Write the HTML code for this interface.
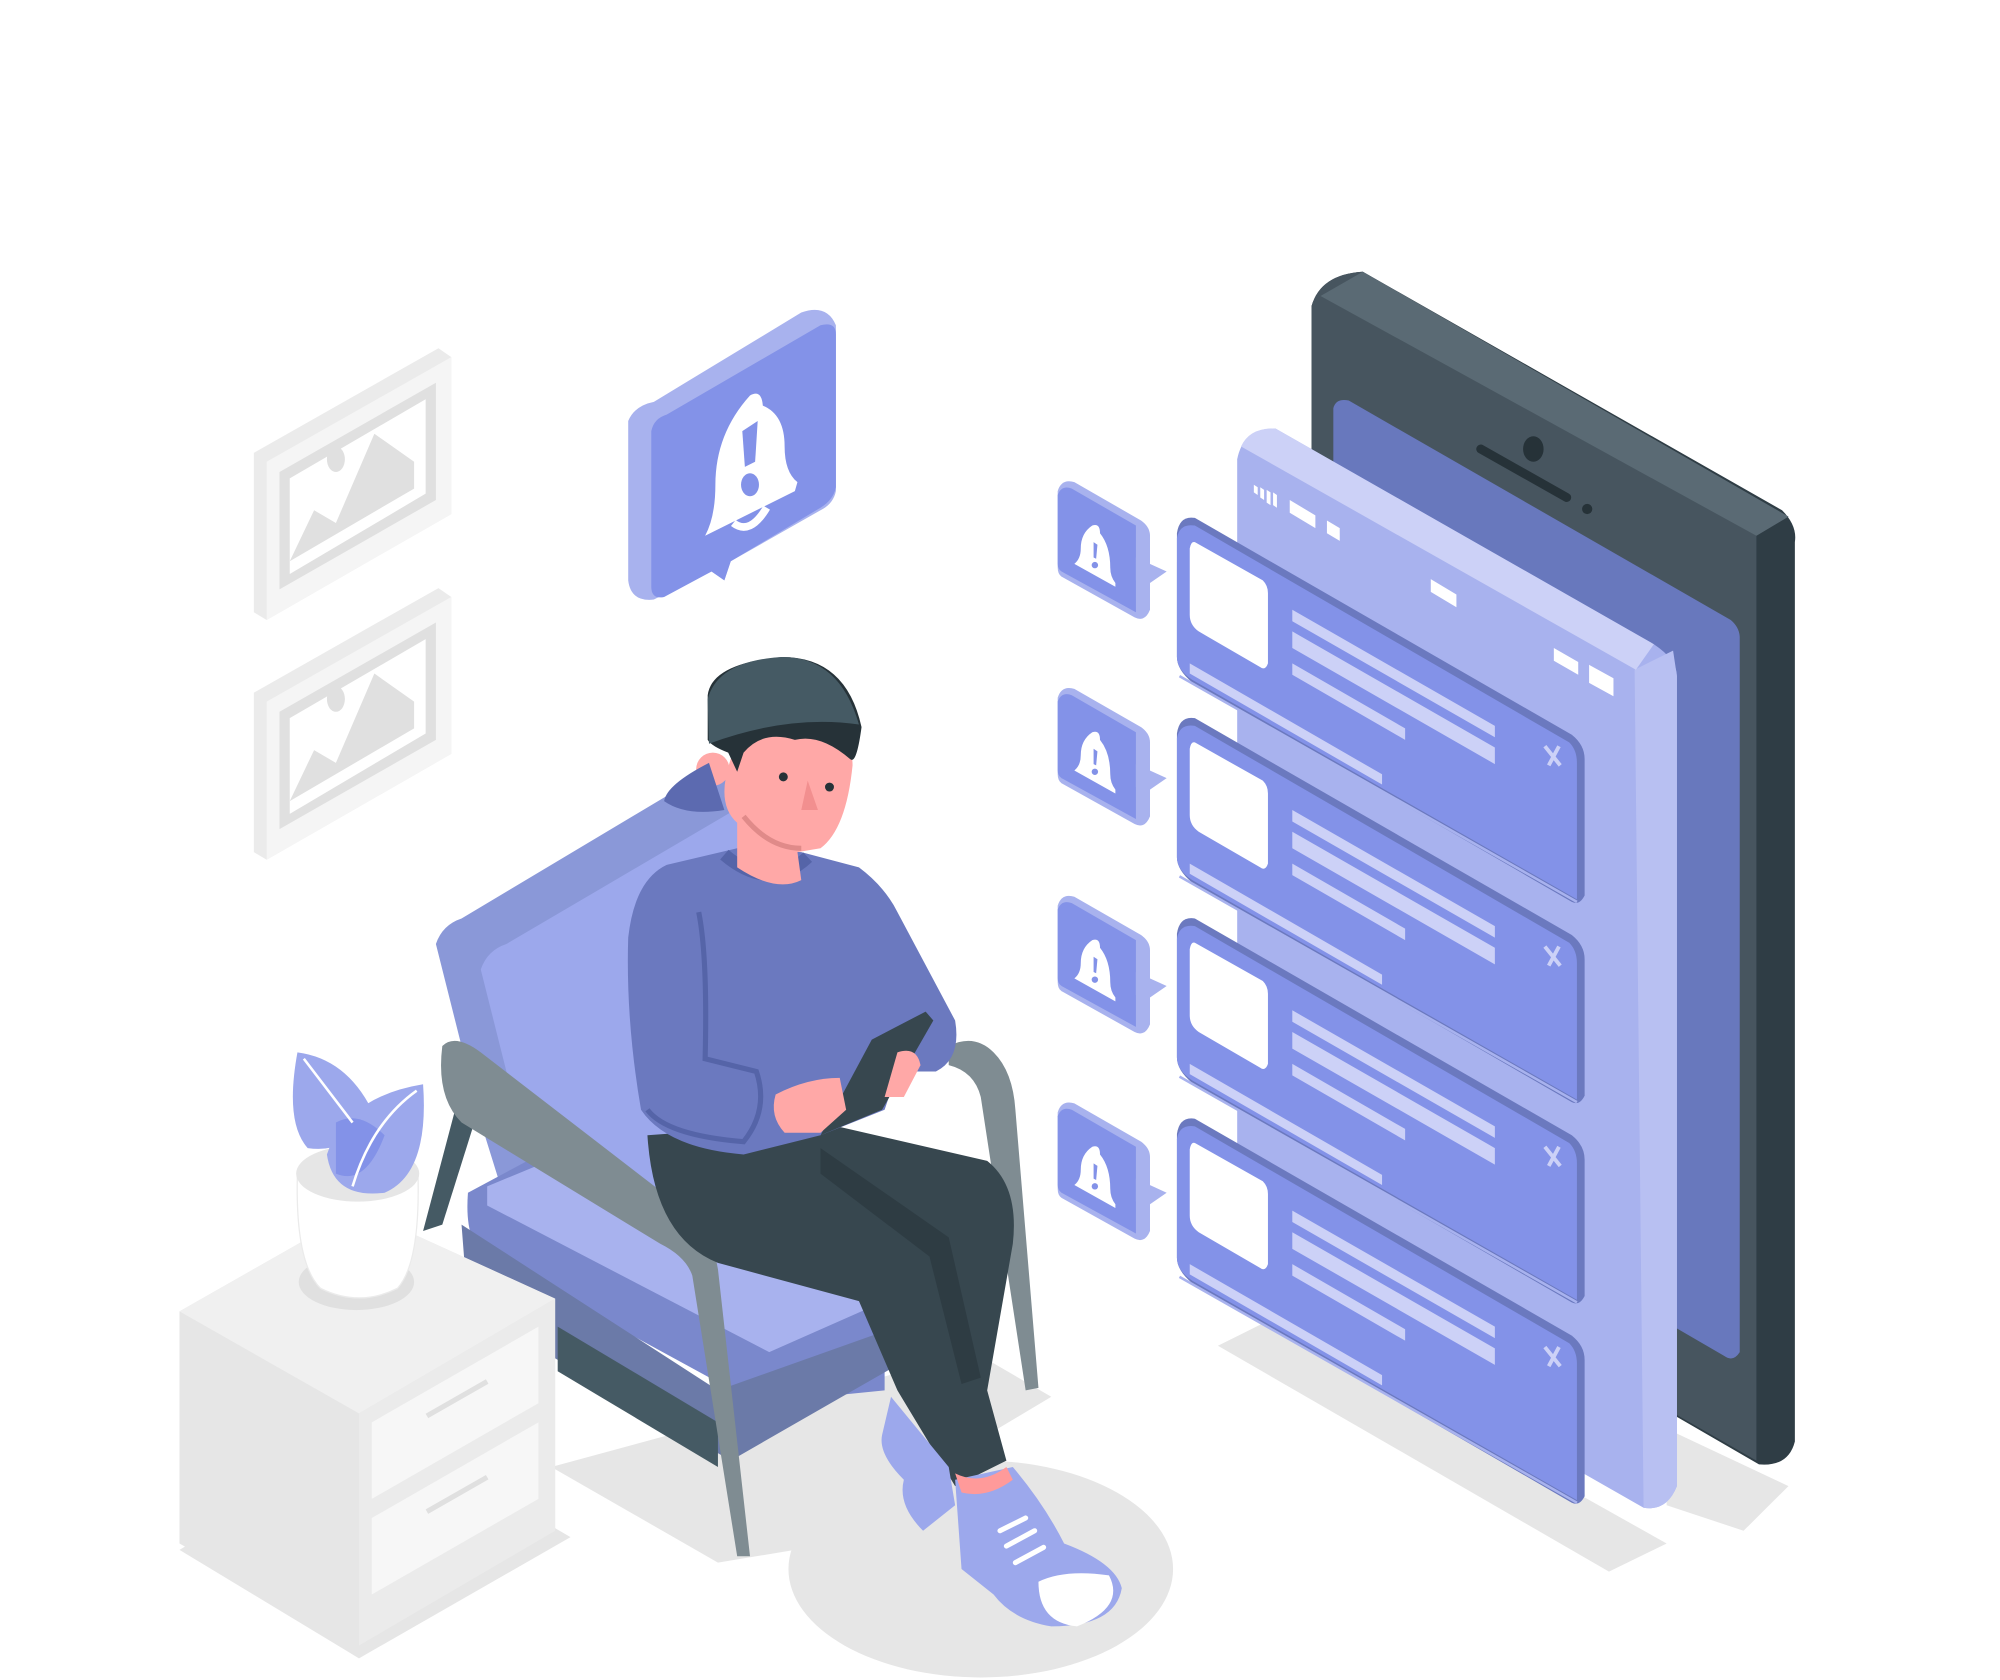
<!DOCTYPE html>
<html><head><style>html,body{margin:0;padding:0;background:#fff}svg{display:block}</style></head>
<body>
<svg width="2000" height="1680" viewBox="0 0 1560 1317" preserveAspectRatio="none" xmlns="http://www.w3.org/2000/svg">
<rect width="1560" height="1317" fill="#fff"/>
<!-- floor shadows -->
<path d="M950 1055 L990 1035 L1300 1210 L1255 1232 Z" fill="#e6e6e6"/>
<path d="M1300 1120 L1395 1165 L1360 1200 L1300 1180 Z" fill="#e6e6e6"/>
<ellipse cx="765" cy="1230" rx="150" ry="85" fill="#e6e6e6"/>
<path d="M430 1150 L560 1225 L620 1215 L820 1095 L760 1060 Z" fill="#e6e6e6"/>
<path d="M140 1215 L280 1300 L445 1205 L300 1120 Z" fill="#e6e6e6"/>
<!-- phone -->
<path d="M1023 240 Q1030 215 1063 213 L1390 400 Q1402 412 1400 425 L1400 1130 Q1395 1150 1372 1148 L1023 945 Z" fill="#2f3d45"/>
<path d="M1023 240 Q1030 215 1063 213 L1395 405 L1370 420 L1370 1145 L1023 945 Z" fill="#47555f"/>
<path d="M1030 232 L1063 213 L1395 405 L1370 420 Z" fill="#5a6a74"/>
<path d="M1040 320 Q1042 312 1052 314 L1350 486 Q1357 492 1357 500 L1357 1060 Q1352 1068 1345 1063 L1040 885 Z" fill="#6878bd"/>
<path d="M1155 352 L1222 390" stroke="#263238" stroke-width="7" stroke-linecap="round"/>
<ellipse cx="1196" cy="352" rx="8" ry="10" fill="#263238"/>
<circle cx="1238" cy="399" r="4" fill="#263238"/>
<!-- panel -->
<path d="M965 360 Q970 335 995 336 L1290 505 Q1308 517 1308 530 L1308 1165 Q1300 1185 1282 1182 L965 1000 Z" fill="#a8b2ee"/>
<path d="M1275 525 L1305 510 L1308 530 L1308 1165 Q1300 1185 1282 1182 Z" fill="#b8c0f2"/>
<path d="M968 350 Q975 335 995 336 L1290 505 L1276 525 Z" fill="#ccd1f7"/>
<g fill="#fff"><path d="M978 380 l3 2v6l-3-2z M983 382 l3 2v8l-3-2z M988 384 l3 2v10l-3-2z M993 386 l3 2v10l-3-2z"/>
<path d="M1006 392 l20 12v10l-20-12z"/><path d="M1035 408 l10 6v10l-10-6z"/><path d="M1116 454 l20 12v10l-20-12z"/><path d="M1212 508 l19 11v10l-19-11z"/>
<path d="M1240 522 l18 10v13l-18-10z" stroke="#fff"/></g>
<!-- cards -->
<g id="card">
<path d="M918 418 Q920 404 932 406 L1226 576 Q1236 584 1236 595 L1236 702 Q1232 710 1226 707 L930 535 Q918 525 918 515 Z" fill="#6b79bf"/>
<path d="M918 422 Q920 410 932 412 L1224 582 Q1230 588 1230 598 L1230 705 L930 533 Q918 525 918 515 Z" fill="#8392e8"/>
<path d="M932 425 L985 455 Q989 459 989 465 L989 520 Q987 526 983 523 L935 495 Q928 490 928 482 L928 430 Q929 424 932 425 Z" fill="#fff"/>
<path d="M1008 478 l158 91v9l-158-91z M1008 495 l158 91v13l-158-91z M1008 520 l88 51v9l-88-51z M928 520 l150 87v8l-150-87z" fill="#ccd1f7"/>
<path d="M920 530 L1230 707" stroke="#a8b2ee" stroke-width="2"/>
<path d="M1205 585 l12 15 M1216 585 l-8 15" stroke="#ccd1f7" stroke-width="3"/>
</g>
<use href="#card" y="157"/><use href="#card" y="314"/><use href="#card" y="471"/>
<!-- small bells -->
<g id="bell">
<path d="M825 385 Q828 375 838 378 L890 408 Q897 413 897 420 L897 478 Q893 488 885 484 L828 452 Q825 450 825 445 Z" fill="#a8b2ee"/>
<path d="M825 388 Q828 380 836 383 L886 412 L886 480 L828 448 Q825 446 825 442 Z" fill="#8392e8"/>
<path d="M886 437 L910 448 L897 457 L886 455 Z" fill="#a8b2ee"/>
<path d="M852 412 Q858 410 858 418 Q866 428 866 445 Q866 452 870 457 L870 460 L838 442 Q843 438 843 430 Q843 418 852 412 Z" fill="#fff"/>
<path d="M853 425 l3 2 -1 11 -2 -1z" fill="#8392e8"/><circle cx="854" cy="443" r="2.5" fill="#8392e8"/>
</g>
<use href="#bell" y="162"/><use href="#bell" y="325"/><use href="#bell" y="487"/>
<!-- big bell box -->
<path d="M490 330 Q495 318 510 315 L625 245 Q645 238 652 255 L652 385 Q650 395 640 400 L570 440 L565 455 L555 448 L510 470 Q492 472 490 455 Z" fill="#a8b2ee"/>
<path d="M508 338 Q510 328 520 325 L640 255 Q652 252 652 262 L652 382 Q650 392 640 398 L570 440 L565 455 L555 448 L518 468 Q508 470 508 460 Z" fill="#8392e8"/>
<path d="M585 310 Q594 305 595 318 Q612 325 612 350 Q612 370 622 378 L620 385 L550 420 Q558 405 558 380 Q558 340 585 310 Z" fill="#fff"/>
<path d="M579 338 l12-8 -2 32 -8 4z" fill="#8392e8"/><ellipse cx="585" cy="380" rx="7" ry="9" fill="#8392e8"/>
<path d="M572 410 Q585 420 598 398" stroke="#fff" stroke-width="6" fill="none"/>
<!-- frames -->
<g id="frame">
<path d="M198 355 L342 273 L352 280 L352 403 L208 486 L198 480 Z" fill="#ebebeb"/>
<path d="M208 362 L352 280 L352 403 L208 486 Z" fill="#f5f5f5"/>
<path d="M218 370 L340 300 L340 392 L218 462 Z" fill="#e0e0e0"/>
<path d="M226 375 L332 313 L332 387 L226 450 Z" fill="#fff"/>
<path d="M226 440 L245 400 L262 410 L292 340 L323 362 L323 383 L226 440 Z" fill="#e0e0e0"/>
<ellipse cx="262" cy="360" rx="7" ry="10" fill="#e0e0e0"/>
</g>
<use href="#frame" y="188"/>
<!-- chair -->
<path d="M340 740 Q345 725 360 720 L560 600 L600 640 L600 1000 L430 1060 Q400 960 375 880 Z" fill="#8a98d8"/>
<path d="M375 760 Q380 745 395 740 L590 625 L610 1000 L430 970 Q410 900 395 840 Z" fill="#9ca8ec"/>
<path d="M365 935 L430 900 L690 1030 L690 1090 L590 1100 L380 985 Q362 975 365 935 Z" fill="#7a88cc"/>
<path d="M380 930 L440 905 L690 1020 L600 1060 L380 945 Z" fill="#a8b2ee"/>
<path d="M360 960 L560 1090 L700 1040 L700 1070 L570 1145 L365 1025 Z" fill="#6b7aa8"/>
<path d="M435 1040 L560 1115 L560 1150 L435 1075 Z" fill="#455a64"/>
<path d="M330 965 L355 870 L370 880 L345 960 Z" fill="#455a64"/>
<path d="M345 820 Q355 810 375 825 L530 945 Q555 965 560 995 L585 1220 L575 1220 L540 1000 Q535 985 515 975 L360 880 Q340 860 345 820 Z" fill="#7f8c92"/>
<path d="M740 820 Q760 810 775 825 Q790 840 792 870 L810 1088 L800 1090 L765 860 Q760 840 740 835 Z" fill="#7f8c92"/>
<path d="M660 740 L680 760 L690 800 L665 800 Z" fill="#7f8c92"/>
<!-- nightstand -->
<path d="M140 1028 L280 948 L433 1018 L433 1200 L280 1290 L140 1210 Z" fill="#e6e6e6"/>
<path d="M140 1028 L280 948 L433 1018 L280 1108 Z" fill="#f0f0f0"/>
<path d="M280 1108 L433 1018 L433 1200 L280 1290 Z" fill="#ebebeb"/>
<path d="M290 1115 L420 1040 L420 1100 L290 1175 Z M290 1190 L420 1115 L420 1175 L290 1250 Z" fill="#f7f7f7"/>
<path d="M333 1110 L380 1083 M333 1185 L380 1158" stroke="#e0e0e0" stroke-width="4"/>
<!-- plant pot -->
<ellipse cx="278" cy="1005" rx="45" ry="22" fill="#e0e0e0"/>
<path d="M232 920 Q230 990 250 1010 Q280 1025 310 1010 Q328 990 326 920 Z" fill="#fff" stroke="#ebebeb"/>
<ellipse cx="279" cy="920" rx="48" ry="22" fill="#e6e6e6"/>
<path d="M232 825 Q270 830 290 870 Q275 905 240 900 Q222 880 232 825 Z" fill="#9ca8ec"/>
<path d="M330 850 Q335 920 300 935 Q260 940 255 905 Q270 860 330 850 Z" fill="#9ca8ec"/>
<path d="M262 880 Q280 870 300 890 Q285 930 262 920 Z" fill="#8392e8"/>
<path d="M237 830 L275 880 M325 855 Q290 880 275 930" stroke="#fff" stroke-width="2" fill="none"/>
<!-- person legs -->
<path d="M505 890 L640 880 L770 910 Q795 930 790 975 L770 1090 L785 1145 L745 1165 L700 1090 L670 1020 L560 990 Q510 970 505 890 Z" fill="#37474f"/>
<path d="M640 900 L740 970 L765 1080 L750 1085 L725 985 L640 920 Z" fill="#263238" opacity=".5"/>
<!-- shoes -->
<path d="M695 1095 L740 1150 L745 1180 L720 1200 Q700 1180 705 1160 Q685 1140 688 1125 Z" fill="#9ca8ec"/>
<path d="M745 1160 L790 1150 Q815 1180 830 1210 Q870 1225 875 1245 Q870 1275 820 1275 Q790 1270 775 1250 L750 1230 Z" fill="#9ca8ec"/>
<path d="M810 1240 Q830 1230 865 1235 Q878 1260 840 1275 Q810 1272 810 1240Z" fill="#fff"/>
<path d="M745 1155 Q765 1165 785 1150 L790 1160 Q770 1175 750 1170 Z" fill="#ff9a9a"/>
<path d="M780 1200 l20-10 M785 1212 l22-12 M792 1225 l22-12" stroke="#fff" stroke-width="4" stroke-linecap="round"/>
<!-- torso -->
<path d="M490 735 Q495 690 520 678 L575 665 L625 668 L670 680 Q690 695 700 715 L745 800 Q750 830 730 840 L700 840 L690 870 L640 890 L580 905 Q520 900 500 870 Q488 800 490 735 Z" fill="#6b79bf"/>
<path d="M545 715 Q552 750 550 830 L590 840 Q600 870 580 895 Q520 890 505 870" fill="none" stroke="#5564a8" stroke-width="4"/>
<path d="M565 670 Q600 700 630 672" stroke="#5564a8" stroke-width="10" fill="none"/>
<!-- tablet & hands -->
<path d="M640 890 L680 815 L722 793 L728 800 L688 870 Z" fill="#37474f"/>
<path d="M605 858 Q630 845 655 845 L660 870 L640 888 L612 888 Q600 875 605 858 Z" fill="#ffa8a7"/>
<path d="M700 825 Q715 820 718 835 L705 860 L690 860 Z" fill="#ffa8a7"/>
<!-- head -->
<path d="M575 585 Q590 565 630 565 Q665 572 665 600 Q660 650 640 665 L622 668 L625 690 Q605 700 575 680 L575 645 Q558 630 570 595 Z" fill="#ffa8a7"/>
<circle cx="556" cy="603" r="13" fill="#ffa8a7"/>
<path d="M580 640 Q600 665 625 665" stroke="#e08a89" stroke-width="4" fill="none"/>
<circle cx="611" cy="609" r="3.5" fill="#263238"/><circle cx="647" cy="617" r="3.5" fill="#263238"/>
<path d="M630 612 L638 635 L625 635 Z" fill="#f28f8f"/>
<path d="M552 545 Q555 520 610 515 Q660 515 672 570 Q668 600 663 595 Q640 575 620 580 Q595 572 580 590 L575 605 L568 590 Q555 585 552 580 Z" fill="#263238"/>
<path d="M552 548 Q560 518 610 515 Q655 515 670 568 Q615 560 553 583 Z" fill="#455a64"/>
<path d="M553 598 Q520 615 518 628 Q535 640 565 635 Z" fill="#5c6ab0"/>
</svg>
</body></html>
